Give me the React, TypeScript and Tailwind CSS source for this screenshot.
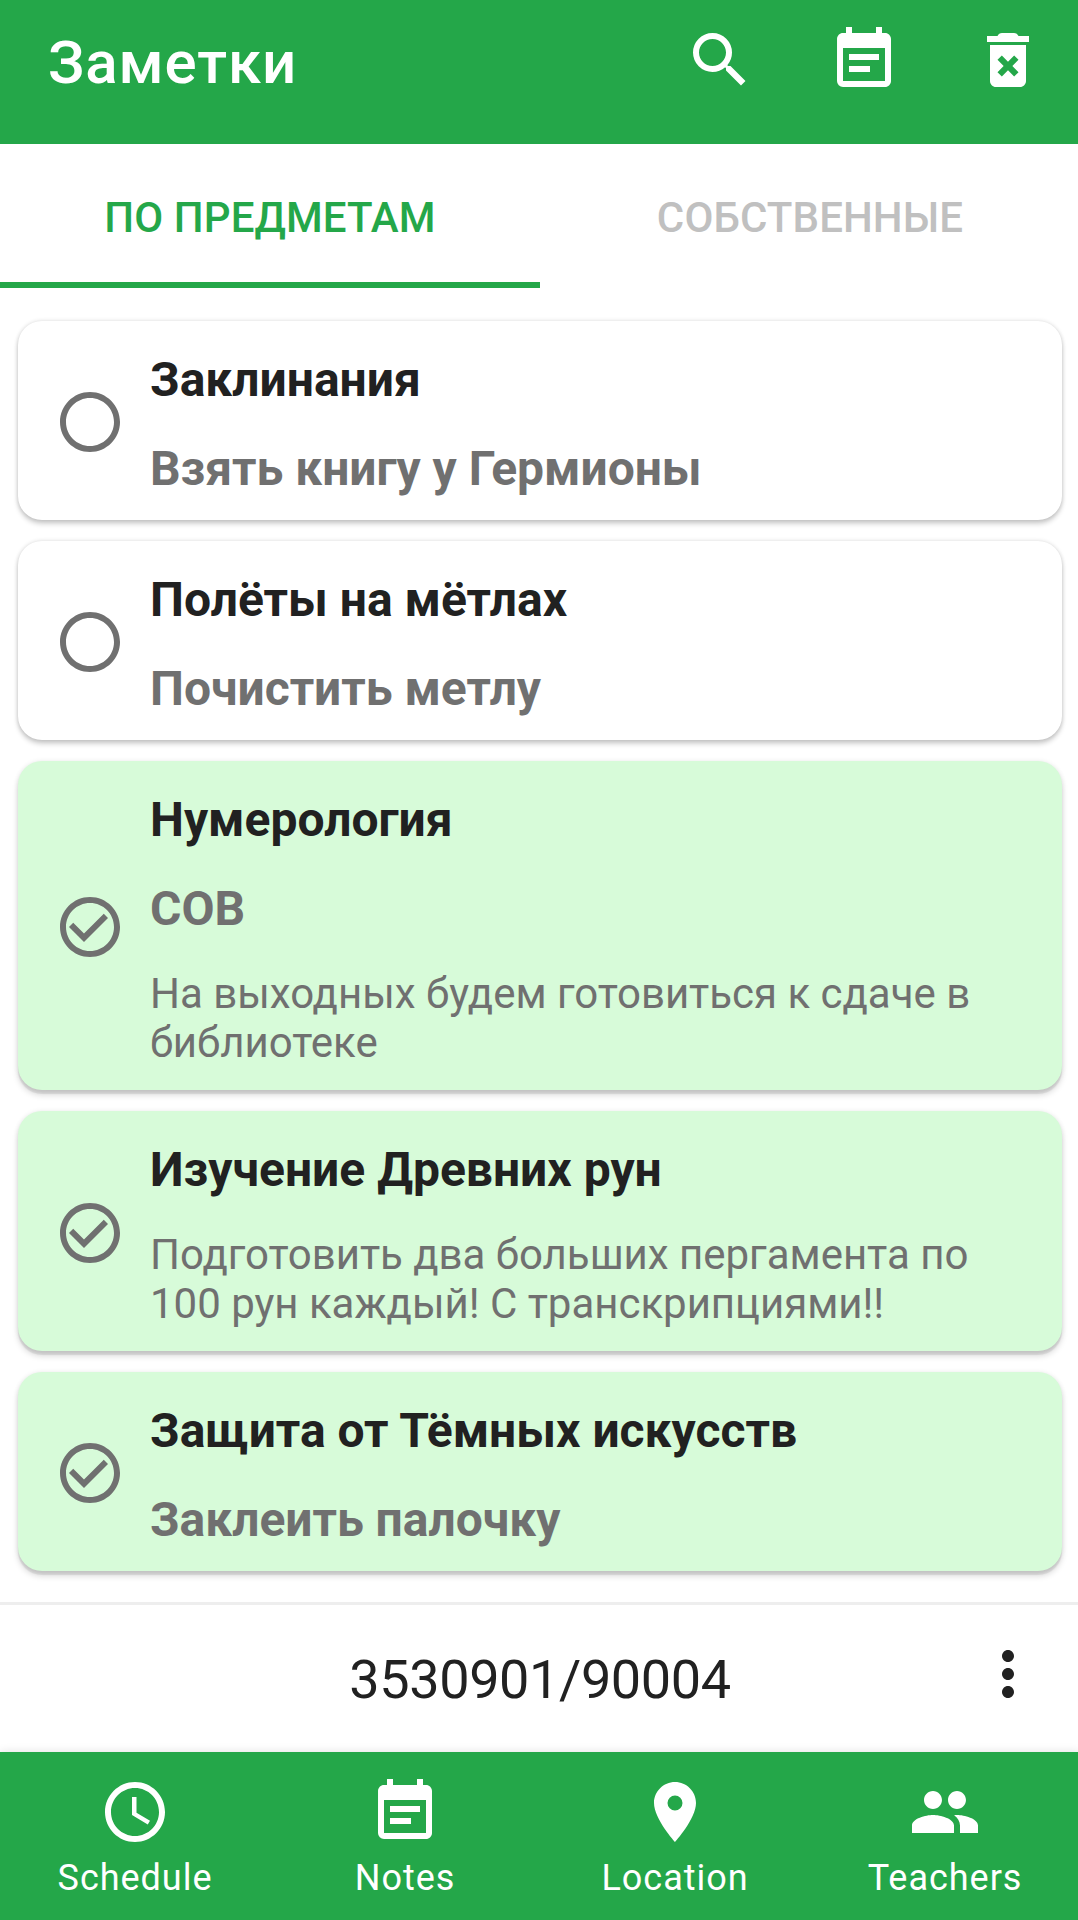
import type { ReactNode } from "react";

const paths = {
  search:
    "M15.5 14h-.79l-.28-.27A6.471 6.471 0 0 0 16 9.5 6.5 6.5 0 1 0 9.5 16c1.61 0 3.09-.59 4.23-1.57l.27.28v.79l5 4.99L20.49 19l-4.99-5zm-6 0C7.01 14 5 11.99 5 9.5S7.01 5 9.5 5 14 7.01 14 9.5 11.99 14 9.5 14z",
  notes:
    "M17 10H7v2h10v-2zm2-7h-1V1h-2v2H8V1H6v2H5c-1.11 0-1.99.9-1.99 2L3 19a2 2 0 0 0 2 2h14c1.1 0 2-.9 2-2V5c0-1.1-.9-2-2-2zm0 16H5V8h14v11zm-5-5H7v2h7v-2z",
  trash:
    "M5 4h3.5c.3-.6.8-1 1.5-1h4c.7 0 1.2.4 1.5 1H19v2H5zM6 7h12v12c0 1.1-.9 2-2 2H8c-1.1 0-2-.9-2-2zM12 12.55 9.95 10.5 8.5 11.95 10.55 14 8.5 16.05 9.95 17.5 12 15.45 14.05 17.5 15.5 16.05 13.45 14 15.5 11.95 14.05 10.5z",
  circle:
    "M12 2C6.48 2 2 6.48 2 12s4.48 10 10 10 10-4.48 10-10S17.52 2 12 2zm0 18c-4.42 0-8-3.58-8-8s3.58-8 8-8 8 3.58 8 8-3.58 8-8 8z",
  check: "M16.59 7.58 10 14.17l-3.59-3.58L5 12l5 5 8-8z",
  hands: "M12.5 7H11v6l5.25 3.15.75-1.23-4.5-2.67z",
  pin: "M12 2C8.13 2 5 5.13 5 9c0 5.25 7 13 7 13s7-7.75 7-13c0-3.87-3.13-7-7-7zm0 9.5a2.5 2.5 0 0 1 0-5 2.5 2.5 0 0 1 0 5z",
  people:
    "M16 11c1.66 0 2.99-1.34 2.99-3S17.66 5 16 5c-1.66 0-3 1.34-3 3s1.34 3 3 3zm-8 0c1.66 0 2.99-1.34 2.99-3S9.66 5 8 5C6.34 5 5 6.34 5 8s1.34 3 3 3zm0 2c-2.33 0-7 1.17-7 3.5V19h14v-2.5c0-2.33-4.67-3.5-7-3.5zm8 0c-.29 0-.62.02-.97.05 1.16.84 1.97 1.97 1.97 3.45V19h6v-2.5c0-2.33-4.67-3.5-7-3.5z",
  more: "M12 8c1.1 0 2-.9 2-2s-.9-2-2-2-2 .9-2 2 .9 2 2 2zm0 2c-1.1 0-2 .9-2 2s.9 2 2 2 2-.9 2-2-.9-2-2-2zm0 6c-1.1 0-2 .9-2 2s.9 2 2 2 2-.9 2-2-.9-2-2-2z",
};

function Icon({ d }: { d: string }) {
  return (
    <svg viewBox="0 0 24 24" className="size-18 shrink-0 fill-current">
      <path fillRule="evenodd" d={d} />
    </svg>
  );
}

function IconButton({ d, label }: { d: string; label: string }) {
  return (
    <button aria-label={label} className="block">
      <Icon d={d} />
    </button>
  );
}

type Note = { subject: string; title?: string; body?: string[]; done: boolean; height: string };

const notes: Note[] = [
  { subject: "Заклинания", title: "Взять книгу у Гермионы", done: false, height: "h-[199px]" },
  { subject: "Полёты на мётлах", title: "Почистить метлу", done: false, height: "h-[199px]" },
  {
    subject: "Нумерология",
    title: "СОВ",
    body: ["На выходных будем готовиться к сдаче в", "библиотеке"],
    done: true,
    height: "h-[329px]",
  },
  {
    subject: "Изучение Древних рун",
    body: ["Подготовить два больших пергамента по", "100 рун каждый! С транскрипциями!!"],
    done: true,
    height: "h-[240px]",
  },
  { subject: "Защита от Тёмных искусств", title: "Заклеить палочку", done: true, height: "h-[199px]" },
];

function NoteCard({ note }: { note: Note }) {
  const tone = note.done
    ? "bg-[#d7fbd9] shadow-[0_4px_1px_rgba(0,0,0,0.08),0_5px_6px_rgba(0,0,0,0.15),0_0_5px_rgba(0,0,0,0.08)]"
    : "bg-white shadow-[0_4px_5px_rgba(0,0,0,0.18),0_0_4px_rgba(0,0,0,0.15)]";
  return (
    <article className={`flex rounded-3xl pl-9 ${note.height} ${tone}`}>
      <button aria-label="Выполнено" className="mt-[3px] flex items-center text-[#707070]">
        <Icon d={note.done ? paths.circle + paths.check : paths.circle} />
      </button>
      <div className="ml-6 flex flex-col gap-8 pt-[30px] whitespace-nowrap text-[#707070]">
        <h2 className="text-[48px] leading-[57px] font-bold text-[#212121]">{note.subject}</h2>
        {note.title && (
          <h3 className="text-[48px] leading-[57px] font-bold tracking-[-0.03px]">{note.title}</h3>
        )}
        {note.body && (
          <p className="text-[42px] leading-[49px] tracking-[-0.02px]">
            {note.body.map((line) => (
              <span key={line} className="block">
                {line}
              </span>
            ))}
          </p>
        )}
      </div>
    </article>
  );
}

function NavItem({ d, children }: { d: string; children: ReactNode }) {
  return (
    <a className="flex flex-col items-center pt-6">
      <Icon d={d} />
      <span className="mt-[9px] text-[36px] leading-[42px] tracking-[0.027em]">{children}</span>
    </a>
  );
}

export default function App() {
  return (
    <div className="flex h-[1920px] w-[1078px] flex-col overflow-hidden bg-white font-[Roboto,sans-serif]">
      <header className="flex h-36 shrink-0 items-start justify-between bg-[#24a749] pt-6 pr-[34px] pl-12 text-white">
        <h1 className="pt-1 text-[60px] leading-[70px] font-medium tracking-[0.015em]">Заметки</h1>
        <div className="flex gap-18">
          <IconButton d={paths.search} label="Поиск" />
          <IconButton d={paths.notes} label="Заметки" />
          <IconButton d={paths.trash} label="Удалить" />
        </div>
      </header>

      <nav className="grid h-36 w-[1080px] shrink-0 grid-cols-2 text-center text-[42px] leading-[50px] font-medium tracking-[0.1px]">
        <a className="border-b-6 border-[#24a749] pt-[49px] text-[#24a749]">ПО ПРЕДМЕТАМ</a>
        <a className="pt-[49px] text-[#c0c0c0]">СОБСТВЕННЫЕ</a>
      </nav>

      <main className="flex grow flex-col gap-[21.2px] pt-[32.7px] pr-4 pl-[18px]">
        {notes.map((note) => (
          <NoteCard key={note.subject} note={note} />
        ))}
      </main>

      <section className="grid h-[150px] shrink-0 grid-cols-[1fr_auto_1fr] items-start border-t-3 border-[#eeeeee] pr-[34px] pl-9 text-[#212121]">
        <span className="col-start-2 pt-[43px] text-[54px] leading-[64px] tracking-[-0.4px]">3530901/90004</span>
        <span className="flex justify-end pt-[33px]">
          <IconButton d={paths.more} label="Ещё" />
        </span>
      </section>

      <footer className="grid h-42 w-[1080px] shrink-0 grid-cols-4 bg-[#24a749] text-white shadow-[0_0_9px_rgba(0,0,0,0.12)]">
        <NavItem d={paths.circle + paths.hands}>Schedule</NavItem>
        <NavItem d={paths.notes}>Notes</NavItem>
        <NavItem d={paths.pin}>Location</NavItem>
        <NavItem d={paths.people}>Teachers</NavItem>
      </footer>
    </div>
  );
}
